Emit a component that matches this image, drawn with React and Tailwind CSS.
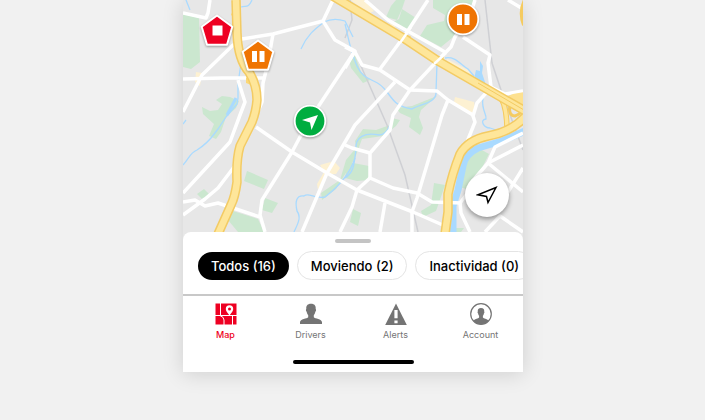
import React from "react";

const greens = [
  "M183 14L199 18 200 62 191 69 183 67Z",
  "M202 107L210 111 218 110 222 104 216 100 222 96 230 97 239 101 236 108 226 117 221 132 216 139 209 136 214 124 203 114Z",
  "M247 171L252 173 268 180 264 189 244 181Z",
  "M197 194L204 189 210 195 202 199Z",
  "M265 198L278 203 272 213 262 210Z",
  "M228 220L233 211 258 219 264 232 238 232Z",
  "M396 0L405 0 402 9 397 20 386 17 391 6Z",
  "M402 9L416 18 409 31 391 23 399 19Z",
  "M433 0L475 0 470 18 452 38 441 47 420 36 427 25 444 21 445 15 433 8Z",
  "M346 160L356 148 355 141 363 129 376 130 390 125 392 118 400 120 396 126 383 136 362 139 355 158 336 189 322 200 321 193 340 180Z",
  "M396 108L412 106 437 96 421 110 419 117 423 128 420 135 409 127 411 118 400 113Z",
  "M348 162L369 166 369 180 357 181 345 178Z",
  "M434 183L445 185 442 194 436 211 423 217 421 211 431 205Z",
  "M353 209L361 213 358 226 350 222Z",
  "M466 158L480 149 489 154 482 168 467 189 458 187Z",
  "M349 60L355 55 361 72 370 80 363 83 351 68Z",
  "M456 228L464 228 461 232 456 232Z",
];

const tans = [
  "M196 72L202 73 200 86 195 82Z",
  "M320 165L334 161 340 168 336 174 325 174 318 190 317 184 324 172Z",
  "M351 0L365 0 374 11 368 14Z",
  "M388 21L397 23 394 29Z",
  "M447 59L468 70 472 76 448 65Z",
  "M455 97L474 102 475 108 472 113 454 102Z",
];

const streams = [
  "M183 165C190 157 190 153 197 150 210 142 213 135 218 129L226 117 237 104 238 98 238 84 241 63",
  "M241 7C246 5 248 9 252 0",
  "M183 124L186 120",
  "M186 0L190 10",
  "M301 49C307 35 315 29 324 22 330 19 336 18 345 21L353 37",
  "M345 24C349 40 350 50 357 66 363 79 370 78 379 84 392 93 390 106 412 109 420 104 437 103 436 92L437 63",
  "M394 115C389 130 385 135 379 135 365 132 355 137 356 149 354 165 354 172 345 178",
  "M355 158C348 180 330 193 325 197 313 199 309 192 304 196 296 195 295 202 297 211 302 218 297 225 294 232",
  "M445 58C455 56 460 64 468 69L474 76",
  "M483 98C481 110 487 114 486 119 479 120 484 128 490 128L499 131",
];

const roads = [
  "M183 13L206 18 208 13 210 0",
  "M183 79L222 78 265 78",
  "M183 112L202 75 232 46 242 39 273 34 323 21 333 0",
  "M273 34L268 63 263 83 262 102 252 125",
  "M234 167L218 188 205 199 183 215",
  "M323 21L335 40 355 51 318 107 300 137 292 152 262 200 260 215 265 232",
  "M238 80L245 102 240 115 230 142 183 193",
  "M256 127L292 152 327 173 357 190 413 212 445 226",
  "M183 202L195 200 205 206 218 203 260 217",
  "M395 82L355 125 327 173 302 232",
  "M345 145L352 148 370 153",
  "M370 178L357 190 352 207 340 232",
  "M428 0L405 35 380 69",
  "M355 51L345 68",
  "M345 47L355 52 362 65 380 70 410 90 437 91 448 100 473 115",
  "M365 0L388 20 445 52",
  "M475 0L470 15 455 37 451 47 438 60 410 90 393 115 390 130 370 153 370 178 393 188 417 193 432 202 462 203",
  "M463 37L490 55 488 63 491 87 505 94 523 91",
  "M508 0L523 9",
  "M487 92L477 103 473 116 475 122 467 142",
  "M448 100L442 115 417 198 412 212 412 232",
  "M385 203L380 232",
  "M523 133L495 147 488 163 470 184",
  "M523 145L488 163 523 192",
  "M523 168L508 192",
  "M485 232L500 216 523 232",
  "M470 190L460 203 461 213 470 232",
];

const highways = [
  "M236 0L237 33Q238 60 249 72 257 85 257 100 256 112 252 122L240 146Q236 160 237 182 235 197 231 205L218 234",
  "M331 -5L405 39 438 61 478 84 525 111",
  "M525 117Q511 132 488 136 468 140 460 154 452 174 448 194L448 212 445 234",
];

function StreetMap() {
  return (
    <svg
      viewBox="183 0 340 240"
      preserveAspectRatio="xMidYMin slice"
      className="block h-60 w-full"
      aria-hidden="true"
    >
      <rect x="0" y="0" width="705" height="240" fill="#e7e7e7" />
      <g fill="#cbe7cf">{greens.map((d) => <path key={d} d={d} />)}</g>
      <g fill="#fdf1d2">{tans.map((d) => <path key={d} d={d} />)}</g>
      <g fill="none" stroke="#cfd0d4" strokeWidth="1.5">
        <path d="M357 57L387 125 405 175 418 232" />
        <path d="M485 0L492 63 502 93 523 150" />
        <path d="M350 0L352 20 345 38" />
      </g>
      <g fill="none" stroke="#a9daff" strokeWidth="1.300" strokeLinejoin="round">
        {streams.map((d) => <path key={d} d={d} />)}
        <path d="M525 131L502 141 478 148Q465 154 463 166L458 190 453 206 453 234" strokeWidth="7" />
        <path d="M227 115L236 98" strokeWidth="3" />
      </g>
      <path d="M480 61L483 66 482 73 486 85 474 79 476 70 480 71Z" fill="#a9daff" />
      <g fill="none" stroke="#ffffff" strokeWidth="3.500" strokeLinejoin="round">
        {roads.map((d) => <path key={d} d={d} />)}
      </g>
      <path d="M505 97L513 94 524 92 524 110Z" fill="#fde190" />
      <g fill="none">
        <path d="M501 98Q507 108 507 131" stroke="#f5cb60" strokeWidth="5.500" />
        <path d="M510 104Q508 116 515 116 521 114 523 109" stroke="#f5cb60" strokeWidth="3" />
        <path d="M501 98Q507 108 507 131" stroke="#fee69a" strokeWidth="3.500" />
        <path d="M525 0Q519 12 524 25" stroke="#f5cb60" strokeWidth="4" />
      </g>
      <path
        d="M400 34L411 36 407 45 401 42ZM433 58L444 56 443 65 436 65ZM233 10L231 15 236 18ZM246 77L246 83 254 86Z"
        fill="#fbd877"
      />
      <g fill="none" stroke="#f3cb64" strokeWidth="9.500" strokeLinejoin="round">
        {highways.map((d) => <path key={d} d={d} />)}
      </g>
      <g fill="none" stroke="#fee69a" strokeWidth="6.500" strokeLinejoin="round">
        {highways.map((d) => <path key={d} d={d} />)}
      </g>
      <path d="M478 83L524 110" stroke="#f3cb64" strokeWidth="1" />
      <path d="M400 43L411 27M434 64L446 53" stroke="#ffffff" strokeWidth="2.500" />
    </svg>
  );
}

function PentagonMarker({ color, children }) {
  return (
    <svg viewBox="0 0 36 36" className="block size-9 drop-shadow-[0_1px_1px_rgba(0,0,0,0.35)]" aria-hidden="true">
      <path
        d="M18 3.500L33.300 14.800 28 32.800H8L2.700 14.800Z"
        fill={color}
        stroke="#ffffff"
        strokeWidth="2"
        strokeLinejoin="round"
      />
      {children}
    </svg>
  );
}

function RoundMarker({ color, children }) {
  return (
    <svg viewBox="0 0 36 36" className="block size-9 drop-shadow-[0_1px_1px_rgba(0,0,0,0.35)]" aria-hidden="true">
      <circle cx="18" cy="18" r="15.300" fill={color} stroke="#ffffff" strokeWidth="1.800" />
      {children}
    </svg>
  );
}

function MapIcon() {
  return (
    <svg viewBox="0 0 22 22" className="size-[22px]" aria-hidden="true">
      <path d="M.5.5h21v21H.5Z" fill="#ee0022" />
      <path d="M5.500 0V12.500M0 12.500H22M5 12.500Q9 14 9 17V22M17.500 12.500V22" fill="none" stroke="#ffffff" strokeWidth="1" />
      <path d="M14.500 12.500C12 9 10.800 8 10.800 6a3.700 3.700 0 0 1 7.400 0c0 2-1.200 3-3.700 6.500Z" fill="#ffffff" />
      <circle cx="14.500" cy="6" r="1.500" fill="#ee0022" />
    </svg>
  );
}

function DriverIcon() {
  return (
    <svg viewBox="0 0 22 22" className="size-[22px]" aria-hidden="true">
      <path
        d="M11 .8c3.600 0 5 2.200 4.700 5.200.6.6.4 2.200-.4 2.800-.3 1.700-.8 2.700-1.500 3.400v2c1 1.300 8.200 1.800 8.200 5V21H0v-1.800c0-3.200 7.200-3.700 8.200-5v-2C7.500 11.500 7 10.500 6.700 8.800 5.900 8.200 5.700 6.600 6.300 6 6 3 7.400.8 11 .8Z"
        fill="#747474"
      />
    </svg>
  );
}

function AlertIcon() {
  return (
    <svg viewBox="0 0 22 22" className="size-[22px]" aria-hidden="true">
      <path d="M11 .5L21.800 22H.2Z" fill="#747474" />
      <path d="M9.400 7h3.200v8.200H9.400ZM9.400 17.500h3.200v2.700H9.400Z" fill="#ffffff" />
    </svg>
  );
}

function AccountIcon() {
  return (
    <svg viewBox="0 0 22 22" className="size-[22px]" aria-hidden="true">
      <circle cx="11" cy="11" r="10.300" fill="#ffffff" stroke="#747474" strokeWidth="1.200" />
      <path
        d="M11 5c2.500 0 3.500 1.500 3.200 3.500.4.500.3 1.500-.3 1.900-.2 1.100-.5 1.800-1 2.300v1.800c.7.900 4.100 1.500 5.800 3.200A10.300 10.300 0 0 1 11 21.300 10.300 10.300 0 0 1 3.300 17.700c1.700-1.700 5.100-2.300 5.800-3.200v-1.800c-.5-.5-.8-1.200-1-2.300-.6-.4-.7-1.400-.3-1.900C7.500 6.500 8.500 5 11 5Z"
        fill="#747474"
      />
    </svg>
  );
}

const tabs = [
  { label: "Map", Icon: MapIcon, active: true },
  { label: "Drivers", Icon: DriverIcon },
  { label: "Alerts", Icon: AlertIcon },
  { label: "Account", Icon: AccountIcon },
];

export default function App() {
  return (
    <div className="min-h-screen bg-[#f1f1f1] pl-px font-['Inter',sans-serif]">
      <main className="mx-auto w-full max-w-[340px] overflow-hidden bg-white shadow-[0_2px_20px_rgba(0,0,0,0.14)]">
        <section className="relative" aria-label="Mapa">
          <StreetMap />
          <button type="button" aria-label="Detenido" className="absolute left-4 top-3">
            <PentagonMarker color="#ee0022">
              <path d="M13.500 13.500h10v10h-10Z" fill="#ffffff" />
            </PentagonMarker>
          </button>
          <button type="button" aria-label="Inactivo" className="absolute left-[57px] top-[37px]">
            <PentagonMarker color="#ef7402">
              <path d="M12 14h5v11h-5ZM19.500 14h5v11h-5Z" fill="#ffffff" />
            </PentagonMarker>
          </button>
          <button type="button" aria-label="Inactivo" className="absolute left-[262px] top-px">
            <RoundMarker color="#ef7402">
              <path d="M12 13h5v11h-5ZM19.500 13h5v11h-5Z" fill="#ffffff" />
            </RoundMarker>
          </button>
          <button type="button" aria-label="Moviendo" className="absolute left-[109px] top-[103px]">
            <RoundMarker color="#00ad40">
              <path d="M26 12L19.500 27 18 19.500 10 17Z" fill="#ffffff" />
            </RoundMarker>
          </button>
          <button
            type="button"
            aria-label="Centrar mapa"
            className="absolute right-[14px] top-[173px] flex size-11 items-center justify-center rounded-full bg-white shadow-[0_2px_5px_rgba(0,0,0,0.4)]"
          >
            <svg viewBox="0 0 22 20" className="h-5 w-[22px]" aria-hidden="true">
              <path d="M20 2.500L12 17.500 10.500 11.500 2 9.800Z" fill="none" stroke="#000000" strokeWidth="1.500" />
            </svg>
          </button>
        </section>

        <section className="relative -mt-2 rounded-t-lg bg-white pt-[7px]">
          <div className="mx-auto h-1 w-9 rounded-full bg-[#c4c4c4]" />
          <div className="mt-2 flex items-center gap-2 overflow-hidden pb-[14px] pl-[15px] text-[13px] font-medium leading-5">
            <button type="button" className="mt-px h-7 shrink-0 rounded-full bg-black px-[13px] text-white">
              Todos (16)
            </button>
            <button type="button" className="h-[29px] shrink-0 rounded-full border border-[#e4e4e4] px-[13px] text-black">
              Moviendo (2)
            </button>
            <button type="button" className="h-[29px] shrink-0 rounded-full border border-[#e4e4e4] px-[13px] text-black">
              Inactividad (0)
            </button>
          </div>
        </section>

        <nav className="border-t-2 border-[#c8c8c8]">
          <div className="flex pt-[7px]">
            {tabs.map(({ label, Icon, active }) => (
              <button
                key={label}
                type="button"
                className={
                  active
                    ? "flex flex-1 flex-col items-center gap-1 text-[9px] font-medium leading-3 text-[#ee0022]"
                    : "flex flex-1 flex-col items-center gap-1 text-[9px] leading-3 text-[#747474]"
                }
              >
                <Icon />
                {label}
              </button>
            ))}
          </div>
          <div className="mx-auto mb-2 mt-[19px] h-1 w-[121px] rounded-full bg-black" />
        </nav>
      </main>
    </div>
  );
}
